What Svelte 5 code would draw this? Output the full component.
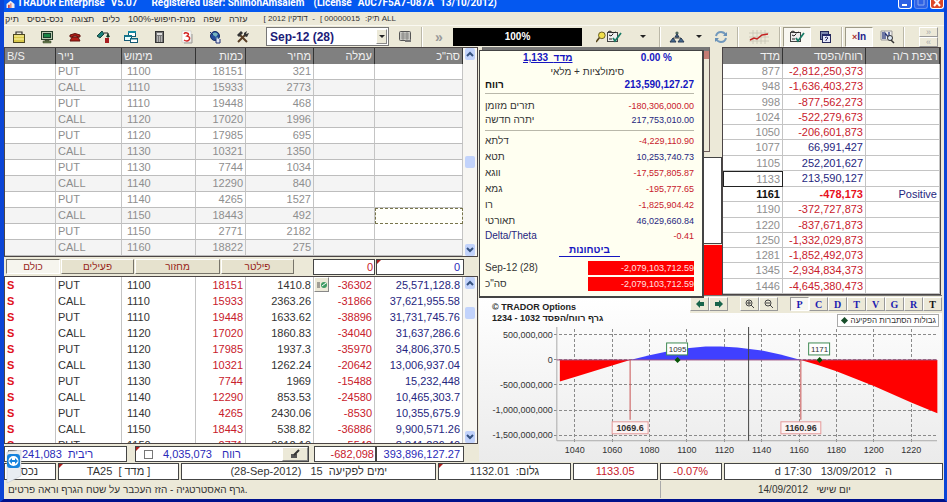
<script lang="ts">
  type Deal = [string, string, string, string, string, string];

  const menu = ['תיק', 'נכס-בסיס', 'תצוגה', 'כלים', 'מנת-חיפוש-100%', 'שפה', 'עזרה'];

  const tools = [
    { icon: 'case', label: 'Portfolio' },
    { icon: 'monitor', label: 'Monitor' },
    { icon: 'phone', label: 'Phone' },
    { icon: 'trade', label: 'Trade' },
    { icon: 'windows', label: 'Windows' },
    { icon: 'calc', label: 'Calculator' },
    { icon: 'three', label: 'Calendar' },
    { icon: 'globe', label: 'Online' },
    { icon: 'hammer', label: 'Tools' }
  ];

  const heads = ['B/S', 'נייר', 'מימוש', 'כמות', 'מחיר', 'עמלה', 'סה"כ'];

  const quotes = [
    ['PUT', 1100, 18151, 321],
    ['CALL', 1110, 15933, 2773],
    ['PUT', 1110, 19448, 468],
    ['CALL', 1120, 17020, 1996],
    ['PUT', 1120, 17985, 695],
    ['CALL', 1130, 10321, 1350],
    ['PUT', 1130, 7744, 1034],
    ['CALL', 1140, 12290, 840],
    ['PUT', 1140, 4265, 1527],
    ['CALL', 1150, 18443, 492],
    ['PUT', 1150, 2771, 2182],
    ['CALL', 1160, 18822, 275]
  ];

  const deals: Deal[] = [
    ['PUT', '1100', '18151', '1410.8', '-36302', '25,571,128.8'],
    ['CALL', '1110', '15933', '2363.26', '-31866', '37,621,955.58'],
    ['PUT', '1110', '19448', '1633.62', '-38896', '31,731,745.76'],
    ['CALL', '1120', '17020', '1860.83', '-34040', '31,637,286.6'],
    ['PUT', '1120', '17985', '1937.3', '-35970', '34,806,370.5'],
    ['CALL', '1130', '10321', '1262.24', '-20642', '13,006,937.04'],
    ['PUT', '1130', '7744', '1969', '-15488', '15,232,448'],
    ['CALL', '1140', '12290', '853.53', '-24580', '10,465,303.7'],
    ['PUT', '1140', '4265', '2430.06', '-8530', '10,355,675.9'],
    ['CALL', '1150', '18443', '538.82', '-36886', '9,900,571.26'],
    ['PUT', '1150', '2771', '3012.10', '-5542', '8,341,236.40']
  ];

  const profits: [string, string][] = [
    ['877', '-2,812,250,373'],
    ['948', '-1,636,403,273'],
    ['998', '-877,562,273'],
    ['1024', '-522,279,673'],
    ['1050', '-206,601,873'],
    ['1077', '66,991,427'],
    ['1105', '252,201,627'],
    ['1133', '213,590,127'],
    ['1161', '-478,173'],
    ['1190', '-372,727,873'],
    ['1220', '-837,671,873'],
    ['1250', '-1,332,029,873'],
    ['1281', '-1,852,492,073'],
    ['1345', '-2,934,834,373'],
    ['1446', '-4,645,380,473']
  ];

  const greeks: [string, string][] = [
    ['דלתא', '-4,229,110.90'],
    ['תטא', '10,253,740.73'],
    ['ווגא', '-17,557,805.87'],
    ['גמא', '-195,777.65'],
    ['רו', '-1,825,904.42'],
    ['תאורטי', '46,029,660.84']
  ];

  const letters = ['P', 'C', 'D', 'T', 'V', 'G', 'R', 'T'];
  let view = $state(0);

  // chart scales: index value -> x, profit in millions -> y
  const px = (v: number) => 96 + (v - 1040) * 1.873;
  const py = (m: number) => 33 - m * 0.0502;

  const xTicks = [1040, 1060, 1080, 1100, 1120, 1140, 1160, 1180, 1200, 1220];
  const yTicks = [500, 0, -500, -1000, -1500];

  const lossLeft = [[1032, 0], [1032, -430], [1040, -340], [1050, -225], [1060, -110], [1069.6, 0]];
  const gain = [[1069.6, 0], [1080, 95], [1090, 175], [1100, 235], [1110, 268], [1118, 270], [1127, 250], [1140, 190], [1150, 110], [1160.96, 0]];
  const lossRight = [[1160.96, 0], [1170, -100], [1180, -225], [1200, -520], [1220, -850], [1234, -1065], [1234, 0]];

  const points = (list: number[][]) => list.map(([v, m]) => `${px(v)},${py(m)}`).join(' ');
  const axisLabel = (m: number) => (m === 0 ? '0' : `${(m * 1000000).toLocaleString('en-US')}`);
  const negative = (s: string) => s.startsWith('-');
</script>

{#snippet icon(name: string)}
  <svg class="icon" viewBox="0 0 16 14" width="16" height="14" aria-hidden="true">
    {#if name === 'case'}
      <path d="M5 4V2h6v2" fill="none" stroke="#333" stroke-width="1.2" />
      <rect x="2.500" y="4.500" width="11" height="8" fill="#d8c84a" stroke="#4b4620" />
      <path d="M3 6h10M3 9h10" stroke="#fff9b0" />
    {:else if name === 'monitor'}
      <rect x="2.500" y="1.500" width="11" height="8" fill="#b8c8b0" stroke="#263d2b" />
      <rect x="4.500" y="3.500" width="7" height="4" fill="#168344" stroke="#173a28" />
      <path d="M6 10h4v1H6zM4 11h8v2H4z" fill="#6b8050" stroke="#34432a" stroke-width=".5" />
    {:else if name === 'phone'}
      <path d="M3 7V5q5-3 10 0v2h-3V6H6v1zM5 7h6l2 4H3z" fill="#b51d16" stroke="#621510" />
    {:else if name === 'trade'}
      <path d="M2 6l5-5 2 3-4 4z" fill="#197f77" stroke="#17433e" />
      <path d="M9 3h4v5" fill="none" stroke="#222" />
      <rect x="10" y="8" width="4" height="5" fill="#a81c20" />
      <path d="M11 7l2-4 2 4z" fill="#143f2a" />
    {:else if name === 'windows'}
      <rect x="5.500" y="1.500" width="7" height="5" fill="#fff" stroke="#145873" />
      <path d="M5 2h8" stroke="#168ba2" stroke-width="2" />
      <rect x="1.500" y="5.500" width="7" height="5" fill="#eaffff" stroke="#145873" />
      <path d="M1 6h8" stroke="#15758c" stroke-width="2" />
      <rect x="7.500" y="8.500" width="7" height="4" fill="#fff" stroke="#145873" />
      <path d="M7 9h8" stroke="#15758c" />
    {:else if name === 'calc'}
      <rect x="4.500" y="1.500" width="8" height="11" fill="#777" stroke="#333" />
      <rect x="6" y="3" width="5" height="2" fill="#ddd" />
      <path d="M6 7h5M6 9h5M6 11h5" stroke="#eee" stroke-dasharray="1 1" />
    {:else if name === 'three'}
      <rect x="3" y="1" width="9" height="11" fill="#fff" stroke="#bbb" stroke-width=".5" />
      <path d="M5 4q1-2 3-1 3 1 0 3 4 1 2 4-2 2-5 0" fill="none" stroke="#d52424" stroke-width="1.500" />
      <path d="M13 4v9H5" fill="none" stroke="#999" />
    {:else if name === 'globe'}
      <circle cx="8" cy="6" r="4.500" fill="#254b9b" stroke="#172f66" />
      <path d="M5 4q3-3 6 0L9 7 6 5zM8 8l3-1-1 3" fill="#75b5bd" />
      <path d="M3 2l3 3M9 8v5h4V9" stroke="#1e2e75" fill="#e0e7f5" />
    {:else if name === 'hammer'}
      <path d="M3 12l8-8M12 12L5 5" stroke="#593e25" stroke-width="2" />
      <path d="M2 5l4-4 2 2-4 4zM9 3l3-2-1 3 3-1-2 4-3-1z" fill="#333" />
    {:else if name === 'layout'}
      <rect x="2.500" y="1.500" width="11" height="9" rx="1" fill="#c9c9c4" stroke="#555" />
      <path d="M4 4h8M4 6h8M4 8h8M6 2v8M10 2v8" stroke="#777" stroke-width=".700" />
      <path d="M8 10h6v2H8z" fill="#777" />
    {:else if name === 'check'}
      <rect x="1.500" y="2.500" width="10" height="9" fill="#eee" stroke="#444" />
      <path d="M2 2l2-1 3 2 3-1M3 5l2 1 2-2M3 9h3" fill="none" stroke="#222" />
      <path d="M7 8l2 3 6-8" fill="none" stroke="#187c66" stroke-width="1.800" />
    {:else if name === 'tree'}
      <path d="M8 4v4M4 10V8h8v2" fill="none" stroke="#444" />
      <circle cx="8" cy="3" r="1.600" fill="#4f675e" />
      <path d="M6 7l2-3 2 3zM1 12l3-4 3 4zM9 12l3-4 3 4z" fill="#456a91" stroke="#293b54" />
    {:else if name === 'refresh'}
      <path d="M3 6q1-4 5-4 3 0 5 3M13 8q-1 4-5 4-3 0-5-3" fill="none" stroke="#7198bc" stroke-width="2" />
      <path d="M14 2v4h-4zM2 12V8h4z" fill="#6690b7" />
    {:else if name === 'help'}
      <rect x="3.500" y="1.500" width="8" height="8" fill="#7c87ae" stroke="#25285b" />
      <rect x="5.500" y="4.500" width="8" height="8" fill="#e6e8f8" stroke="#25285b" />
      <path d="M6 5h7" stroke="#24286b" stroke-width="2" />
      <path d="M8 8q1-2 3 0l-2 2v1" fill="none" stroke="#25285b" />
    {:else if name === 'find'}
      <path d="M2 1h11v9H2z" fill="#eee" stroke="#999" />
      <path d="M4 2v7M6 9V3l4 5V2" fill="none" stroke="#26357a" stroke-width="1.300" />
      <circle cx="11" cy="8" r="2.500" fill="#dce8f6" stroke="#333" />
      <path d="M12 10l3 3" stroke="#333" stroke-width="1.500" />
    {/if}
  </svg>
{/snippet}

{#snippet scrollbar(thumb: string)}
  <div class="scroll">
    <button type="button" aria-label="Scroll up"><svg viewBox="0 0 8 6" width="8" height="6"><path d="M1 5l3-3 3 3" /></svg></button>
    <span class="thumb {thumb}"></span>
    <button type="button" aria-label="Scroll down"><svg viewBox="0 0 8 6" width="8" height="6"><path d="M1 1l3 3 3-3" /></svg></button>
  </div>
{/snippet}

{#snippet dealCols()}
  <colgroup>
    <col class="c-side" /><col class="c-paper" /><col class="c-strike" /><col class="c-qty" /><col class="c-price" /><col class="c-fee" /><col class="c-total" />
  </colgroup>
{/snippet}

<div class="window">
  <header class="title">
    <svg viewBox="0 0 10 10" width="9" height="8" aria-hidden="true"><path d="M0 5l5-4 5 4v5H0z" fill="#eee" /><path d="M2 6h2v4H2zM5 4h1v6H5z" fill="#c33" /></svg>
    <span>TRADOR Enterprise</span>
    <span>V5.07</span>
    <span class="user">Registered user: ShimonAmsalem</span>
    <span>(License</span>
    <span>A0C7F5A7-087A</span>
    <span>13/10/2012)</span>
    <div class="controls">
      <button type="button" aria-label="Minimize"><svg viewBox="0 0 12 8" width="12" height="8"><path d="M3 5h5" stroke="#fff" stroke-width="2" /></svg></button>
      <button type="button" class="dim" aria-label="Maximize"><svg viewBox="0 0 12 8" width="12" height="8"><path d="M3 0v5h6V0" fill="none" stroke="#89a9f0" /></svg></button>
      <button type="button" class="close" aria-label="Close"><svg viewBox="0 0 12 8" width="12" height="8"><path d="M3-1l6 7M9-1L3 6" stroke="#fff" stroke-width="2" /></svg></button>
    </div>
  </header>

  <nav class="menu">
    {#each menu as item}
      <button type="button" dir="rtl">{item}</button>
    {/each}
    <div class="account">
      <span>[ 2012 דודקין &nbsp;-</span>
      <span>[ 00000015</span>
      <span class="file"><bdi dir="rtl">תיק:</bdi> ALL</span>
    </div>
  </nav>

  <div class="toolbar">
    {#each tools as tool}
      <button type="button" class="tool" aria-label={tool.label}>{@render icon(tool.icon)}</button>
    {/each}
    <div class="combo">
      <select aria-label="Expiry"><option>Sep-12 (28)</option></select>
      <span class="drop" aria-hidden="true"></span>
    </div>
    <button type="button" class="tool" aria-label="Layout">{@render icon('layout')}</button>
    <span class="sep"></span>
    <button type="button" class="tool more" aria-label="More">»</button>
    <div class="progress" role="progressbar" aria-valuenow="100" aria-label="Progress">100%</div>
    <button type="button" class="tool wide" aria-label="Search checklist">
      <svg viewBox="0 0 12 14" width="10" height="14" aria-hidden="true"><circle cx="7" cy="5" r="4" fill="#f0df4a" stroke="#504718" /><path d="M4 8l-4 5" stroke="#554318" stroke-width="2" /></svg>
      {@render icon('check')}
    </button>
    <button type="button" class="arrow" aria-label="Search options"></button>
    <span class="sep"></span>
    <button type="button" class="tool" aria-label="Structure">{@render icon('tree')}</button>
    <button type="button" class="arrow" aria-label="Structure options"></button>
    <button type="button" class="tool" aria-label="Refresh">{@render icon('refresh')}</button>
    <span class="sep"></span>
    <button type="button" class="tool graph" aria-label="Graph">
      <svg viewBox="0 0 20 14" width="20" height="14" aria-hidden="true">
        <path d="M4 0v14M8 0v14M12 0v14M16 0v14M0 3h20M0 7h20M0 11h20" stroke="#c8c4b5" stroke-width=".800" />
        <path d="M1 10l4-2 3 1 5-4 6-1" fill="none" stroke="#c42121" stroke-width="1.500" />
      </svg>
    </button>
    <span class="sep"></span>
    <button type="button" class="tool pressed" aria-label="Checklist">{@render icon('check')}</button>
    <button type="button" class="tool" aria-label="Help">{@render icon('help')}</button>
    <span class="sep"></span>
    <button type="button" class="tool pressed in" aria-label="In"><sup>×</sup>In</button>
    <button type="button" class="tool" aria-label="Find">{@render icon('find')}</button>
    <span class="sep"></span>
    <div class="stack">
      <button type="button" aria-label="Expand">»</button>
      <button type="button" aria-label="Collapse">«</button>
    </div>
  </div>

  <main>
    <section class="left">
      <div class="panel">
        <table class="grid quotes">
          {@render dealCols()}
          <thead>
            <tr>{#each heads as head, i}<th class:num={i > 2}>{head}</th>{/each}</tr>
          </thead>
          <tbody>
            {#each quotes as [paper, strike, qty, price], i}
              <tr>
                <td></td><td>{paper}</td><td class="strike">{strike}</td><td class="num">{qty}</td><td class="num">{price}</td><td></td><td class:focus={i === 9}></td>
              </tr>
            {/each}
          </tbody>
        </table>
        {@render scrollbar('middle')}
      </div>

      <div class="tabs">
        <button type="button" class="tab active">כולם</button>
        <button type="button" class="tab mid">פעילים</button>
        <button type="button" class="tab big">מחזור</button>
        <button type="button" class="tab mid">פילטר</button>
        <output class="box fee red">0</output>
        <output class="box sum blue mark">0</output>
      </div>

      <div class="panel deals-panel">
        <table class="grid deals">
          {@render dealCols()}
          <tbody>
            {#each deals as [paper, strike, qty, price, fee, total], i}
              <tr>
                <td class="side">S</td><td>{paper}</td><td class="strike">{strike}</td><td class="num red">{qty}</td><td class="num">{price}</td>
                <td class="num red fee-cell">
                  {#if i === 0}
                    <button type="button" class="mini" aria-label="Row action"><svg viewBox="0 0 12 10" width="12" height="10"><path d="M1 3h3M1 5h3M1 7h3" stroke="#555" /><circle cx="8" cy="5" r="3" fill="#3d9a62" /><path d="M6 6l4-3" stroke="#fff" /></svg></button>
                  {/if}{fee}
                </td>
                <td class="num navy">{total}</td>
              </tr>
            {/each}
          </tbody>
        </table>
        {@render scrollbar('top')}
      </div>

      <div class="totals">
        <label class="box interest"><input type="checkbox" />241,083 &nbsp;ריבית</label>
        <div class="box gain-box mark">
          <label><input type="checkbox" /><span>4,035,073</span> <span>רווח</span></label>
          <button type="button" aria-label="Edit"><svg viewBox="0 0 12 10" width="12" height="10"><path d="M2 5h6v4H2z" fill="#555" /><path d="M5 6l5-5" stroke="#333" stroke-width="2" /></svg></button>
        </div>
        <output class="box fee red">-682,098</output>
        <output class="box sum blue">393,896,127.27</output>
      </div>
    </section>

    <section class="right">
      <div class="upper">
        <div class="behind">
          <div class="sim"><span></span></div>
          <div class="gauge"></div>
          <div class="gauge-loss"></div>
        </div>

        <div class="panel">
          <table class="grid profits">
            <colgroup><col class="p-index" /><col class="p-value" /><col class="p-floor" /></colgroup>
            <thead><tr><th class="num">מדד</th><th class="num">רווח/הפסד</th><th class="num" dir="rtl">רצפת ר/ה</th></tr></thead>
            <tbody>
              {#each profits as [index, value]}
                <tr class:current={index === '1161'}>
                  <td class="num index" class:selected={index === '1133'}>{index}</td>
                  <td class="num {negative(value) ? 'red' : 'navy'}">{value}</td>
                  <td class="num navy floor">{index === '1161' ? 'Positive' : ''}</td>
                </tr>
              {/each}
            </tbody>
          </table>
        </div>

        <aside class="popup">
          <div class="top-line"><a href="#index">1,133 &nbsp;מדד</a><b>0.00 %</b></div>
          <div class="subtitle" dir="rtl">סימולציות + מלאי</div>
          <div class="line profit"><span>רווח</span><b>213,590,127.27</b></div>
          <div class="group">
            <div class="line"><span>תזרים מזומן</span><span class="val red">-180,306,000.00</span></div>
            <div class="line"><span>יתרה חדשה</span><span class="val navy">217,753,010.00</span></div>
          </div>
          {#each greeks as [name, value]}
            <div class="line greek"><span>{name}</span><span class="val {negative(value) ? 'red' : 'navy'}">{value}</span></div>
          {/each}
          <div class="line"><span class="navy">Delta/Theta</span><span class="val red">-0.41</span></div>
          <div class="margin-title"><a href="#margin">ביטחונות</a></div>
          <div class="line greek"><span>Sep-12 (28)</span><span class="val alert">-2,079,103,712.59</span></div>
          <div class="line greek"><span>סה"כ</span><span class="val alert">-2,079,103,712.59</span></div>
        </aside>
      </div>

      <div class="chart">
        <div class="chart-head">
          <div class="chart-title">© TRADOR Options<br />1234 - 1032 גרף רווח/הפסד</div>
          <div class="chart-side">
            <div class="chart-tools">
              <button type="button" aria-label="Previous"><svg viewBox="0 0 10 8" width="10" height="8"><path d="M1 4l4-4v2h4v4H5v2z" fill="#17644b" /></svg></button>
              <button type="button" class="gap" aria-label="Next"><svg viewBox="0 0 10 8" width="10" height="8"><path d="M9 4L5 0v2H1v4h4v2z" fill="#17644b" /></svg></button>
              <button type="button" aria-label="Zoom in"><svg viewBox="0 0 10 10" width="10" height="10"><circle cx="4" cy="4" r="3" fill="none" stroke="#444" /><path d="M6 6l3 3M2 4h4M4 2v4" stroke="#444" /></svg></button>
              <button type="button" class="gap" aria-label="Zoom out"><svg viewBox="0 0 10 10" width="10" height="10"><circle cx="4" cy="4" r="3" fill="none" stroke="#444" /><path d="M6 6l3 3M2 4h4" stroke="#444" /></svg></button>
              {#each letters as letter, i}
                <button type="button" class="letter" class:on={view === i} class:black={i === 7} onclick={() => (view = i)}>{letter}</button>
              {/each}
            </div>
            <div class="legend"><i></i><span>גבולות הסתברות הפקיעה</span></div>
          </div>
        </div>
        <svg class="plot" viewBox="0 0 464 135" role="img" aria-label="Profit and loss">
          {#each yTicks as m}
            <line class="dash" x1="75" x2="459" y1={py(m)} y2={py(m)} />
            <text x="74" y={py(m) + 3} text-anchor="end">{axisLabel(m)}</text>
          {/each}
          {#each xTicks as v}
            <line class="dash" x1={px(v)} x2={px(v)} y1="2" y2="115" />
            <text x={px(v)} y="126" text-anchor="middle">{v}</text>
          {/each}
          <path class="axis" d="M78 0V114H459" />
          <polygon points={points(lossLeft)} fill="#f00" />
          <polygon points={points(gain)} fill="#4040ff" />
          <polygon points={points(lossRight)} fill="#f00" />
          <line class="zero" x1="78" x2="459" y1="33" y2="33" />
          <line class="now" x1={px(1133)} x2={px(1133)} y1="0" y2="114" />
          {#each [1069.6, 1160.96] as v}
            <line class="even" x1={px(v)} x2={px(v)} y1="33" y2="93" />
            <rect class="even-box" x={px(v) - (v > 1100 ? 20 : 18)} y="95" width={v > 1100 ? 40 : 36} height="12" />
            <text class="bold" x={px(v)} y="104" text-anchor="middle">{v}</text>
          {/each}
          {#each [1095, 1171] as v}
            <path d="M{px(v)} 30l3 3-3 3-3-3z" fill="#075407" />
            <rect class="bound" x={px(v) - 11} y="16" width="21" height="12" />
            <text class="slim" x={px(v)} y="25" text-anchor="middle">{v}</text>
          {/each}
        </svg>
      </div>
    </section>
  </main>

  <div class="info">
    <span class="cell asset">נכס</span>
    <span class="cell mark">TA25 &nbsp;[ מדד ]</span>
    <span class="cell">(28-Sep-2012) &nbsp; 15 &nbsp;ימים לפקיעה</span>
    <span class="cell mark">1132.01 &nbsp;<bdi dir="rtl">גלום:</bdi></span>
    <span class="cell red">1133.05</span>
    <span class="cell red">-0.07%</span>
    <span class="cell">d 17:30 &nbsp; 13/09/2012 &nbsp; ה</span>
  </div>

  <footer>
    <span class="hint">גרף האסטרטגיה - הזז העכבר על שטח הגרף וראה פרטים.</span>
    <span class="today">14/09/2012 &nbsp; יום שישי</span>
  </footer>

  <div class="remote" aria-hidden="true">
    <svg viewBox="0 0 16 34" width="16" height="34"><path d="M1 2l14-2v26L1 33z" fill="#e8edf2" stroke="#b9c0c8" stroke-width=".500" /><rect x="1" y="4" width="13" height="14" rx="3" fill="#1683dd" /><circle cx="7.500" cy="11" r="5" fill="#fff" /><path d="M3 11l3-3v2h3V8l3 3-3 3v-2H6v2z" fill="#1683dd" /></svg>
  </div>
</div>

<style>
  :global(body) {
    background: #ece9d8;
  }

  .window,
  .window * {
    box-sizing: border-box;
  }

  .window {
    position: relative;
    display: flex;
    flex-direction: column;
    min-height: 100vh;
    border: solid #0b45d6;
    border-width: 0 3px 3px 4px;
    border-bottom-color: #00128c;
    background: #ece9d8;
    color: #333;
    font-family: "Liberation Sans", Arial, sans-serif;
    font-size: 11px;
    overflow: hidden;
  }

  button {
    display: inline-flex;
    align-items: center;
    justify-content: center;
    margin: 0;
    padding: 0;
    border: 0;
    background: none;
    color: inherit;
    font: inherit;
  }

  .red {
    color: #c8202c;
  }

  .blue {
    color: #2a2ab8;
  }

  .navy {
    color: #26267e;
  }

  .title {
    display: flex;
    gap: 6px;
    height: 12px;
    padding-left: 2px;
    background: #0458f0;
    color: #fff;
    font-family: Roboto, "Liberation Sans", sans-serif;
    font-size: 10px;
    font-weight: bold;
    line-height: 6px;
    white-space: nowrap;
    overflow: hidden;
  }

  .title > svg {
    margin-right: -4px;
  }

  .user {
    margin: 0 3px 0 8px;
  }

  .controls {
    display: flex;
    gap: 2px;
    margin-left: auto;
  }

  .controls button {
    width: 14px;
    height: 9px;
    border: 1px solid #fff;
    border-top: 0;
    border-radius: 0 0 3px 3px;
    background: #2f62e4;
  }

  .controls .dim {
    border-color: #5f8cf0;
  }

  .controls .close {
    background: #dd4828;
  }

  .menu {
    display: flex;
    align-items: center;
    gap: 8px;
    height: 13px;
    padding-left: 1px;
    font-size: 9px;
    white-space: nowrap;
  }

  .menu button {
    line-height: 12px;
  }

  .account {
    display: flex;
    gap: 5px;
    margin-left: 8px;
    font-size: 8px;
    line-height: 12px;
  }

  .toolbar {
    display: flex;
    align-items: center;
    height: 22px;
    padding: 0 6px 0 1px;
    border-top: 1px solid #faf9f2;
  }

  .tool {
    flex: none;
    width: 28px;
    height: 20px;
  }

  .tool.wide {
    width: 30px;
    margin-left: 12px;
  }

  .tool.graph {
    width: 36px;
  }

  .pressed {
    border: 1px solid #aaa692;
    border-color: #9d9a88 #fff #fff #9d9a88;
    background: #f8f7f1;
  }

  .in {
    color: #23238c;
    font-size: 10px;
    font-weight: bold;
  }

  .in sup {
    color: #a33;
    font-size: 9px;
    line-height: 6px;
  }

  .more {
    color: #999;
    font-size: 14px;
    font-weight: bold;
  }

  .arrow {
    flex: none;
    width: 14px;
    height: 20px;
    margin: 0 1px;
  }

  .wide + .arrow {
    margin: 0 7px 0 12px;
  }

  .arrow::before,
  .drop::before {
    content: "";
    border: solid transparent;
    border-width: 3px 3px 0;
    border-top-color: #222;
  }

  .sep {
    flex: none;
    width: 2px;
    height: 20px;
    margin: 0 2px;
    border-left: 1px solid #bbb8a8;
    background: #fff;
  }

  .combo {
    position: relative;
    flex: none;
    width: 123px;
    margin: 0 2px 0 9px;
  }

  .combo select {
    width: 100%;
    height: 19px;
    padding: 0 3px;
    border: 1px solid #777;
    background: #fff;
    color: #1b1b78;
    font: bold 12px "Liberation Sans", sans-serif;
    appearance: none;
  }

  .drop {
    position: absolute;
    top: 2px;
    right: 2px;
    display: grid;
    place-items: center;
    width: 11px;
    height: 15px;
    border: 1px solid #888;
    border-color: #fff #888 #888 #fff;
    background: #ece9d8;
    pointer-events: none;
  }

  .progress {
    flex: 1;
    height: 18px;
    background: #000;
    color: #fff;
    font-size: 10px;
    font-weight: bold;
    line-height: 18px;
    text-align: center;
  }

  .stack {
    display: grid;
    width: 19px;
    margin-left: 12px;
  }

  .stack button {
    height: 10px;
    border: 1px solid #fff;
    border-color: #fff #999 #999 #fff;
    color: #aaa;
    font-size: 9px;
    line-height: 8px;
  }

  main {
    display: grid;
    grid-template-columns: 474fr 466fr;
  }

  .left,
  .right {
    min-width: 0;
  }

  .panel {
    display: flex;
    border: 1px solid #4b4545;
    background: #fff;
  }

  .grid {
    flex: 1;
    width: 0;
    min-width: 0;
    border-collapse: separate;
    border-spacing: 0;
    table-layout: fixed;
  }

  .c-side { width: 51px; }
  .c-paper { width: 66px; }
  .c-strike { width: 74px; }
  .c-qty { width: 50px; }
  .c-price { width: 68px; }
  .c-fee { width: 61px; }
  .c-total { width: 88px; }
  .p-index { width: 60px; }
  .p-value { width: 83px; }
  .p-floor { width: 74px; }

  th,
  td {
    height: 16px;
    padding: 0 2px;
    border-right: 1px solid #c4c4c4;
    font-weight: normal;
    line-height: 15px;
    text-align: left;
    white-space: nowrap;
  }

  th {
    border-right-color: #333;
    background: #808080;
    color: #f0f0f0;
    line-height: 16px;
  }

  .num {
    text-align: right;
  }

  .strike {
    padding-left: 5px;
  }

  .quotes td {
    border-bottom: 1px solid #bdbdbd;
    color: #8e8e8e;
  }

  .quotes tbody tr:nth-child(even) {
    background: #f4f4f4;
  }

  .quotes td.focus {
    border: 1px dashed #77744c;
    background: #fffffa;
  }

  .deals-panel {
    height: 168px;
    overflow: hidden;
  }

  .deals .side {
    color: #e01020;
    font-weight: bold;
  }

  .fee-cell {
    position: relative;
  }

  .mini {
    position: absolute;
    top: 0;
    left: 0;
    width: 15px;
    height: 15px;
    border: 1px solid #fff;
    border-color: #fff #888 #888 #fff;
    background: #ece9d8;
  }

  .scroll {
    display: flex;
    flex-direction: column;
    align-items: center;
    width: 14px;
    background: #f7f6f2;
  }

  .scroll button,
  .thumb {
    width: 10px;
    height: 12px;
    border-radius: 2px;
    background: #c2d3fb;
  }

  .scroll button:last-child {
    margin-top: auto;
  }

  .scroll path {
    fill: none;
    stroke: #35527f;
    stroke-width: 2;
  }

  .thumb.middle {
    margin-top: 96px;
  }

  .thumb.top {
    margin-top: 18px;
  }

  .tabs,
  .totals {
    display: flex;
    align-items: center;
    padding-right: 14px;
  }

  .tabs {
    gap: 1px;
    height: 19px;
    padding-left: 2px;
  }

  .tab {
    height: 15px;
    border: 1px solid #fff;
    border-color: #fff #77746a #77746a #fff;
    background: #e6e2ce;
    color: #962418;
    font-size: 10px;
  }

  .tab.active {
    width: 54px;
    border-color: #77746a #fff #fff #77746a;
    background: #f6f5ee;
  }

  .tab.mid {
    width: 73px;
  }

  .tab.big {
    width: 85px;
  }

  .box {
    position: relative;
    height: 16px;
    padding: 0 3px;
    border: 1px solid #444;
    background: #fff;
    line-height: 14px;
    text-align: right;
    white-space: nowrap;
  }

  .box.fee {
    width: 62px;
    margin-left: auto;
    padding-right: 1px;
  }

  .box.sum {
    width: 88px;
  }

  .mark::before {
    content: "";
    position: absolute;
    top: 0;
    left: 0;
    border: 2px solid #b02020;
    border-right-color: transparent;
    border-bottom-color: transparent;
  }

  .totals {
    align-items: flex-end;
    height: 18px;
  }

  .totals input {
    width: 9px;
    height: 9px;
    margin: 0;
    border: 1px solid #777;
    background: #fff;
    appearance: none;
  }

  .interest,
  .gain-box,
  .gain-box label {
    display: flex;
    align-items: center;
    color: #2a2ab8;
  }

  .interest {
    gap: 5px;
    width: 123px;
  }

  .gain-box {
    justify-content: space-between;
    width: 174px;
    margin-left: 8px;
    padding: 0 0 0 8px;
  }

  .gain-box label {
    gap: 10px;
  }

  .gain-box button {
    width: 26px;
    height: 14px;
    border: 1px solid #fff;
    border-color: #fff #888 #888 #fff;
    background: #ece9d8;
  }

  .upper {
    position: relative;
    display: grid;
    grid-template-columns: 244fr 219fr;
    padding-right: 3px;
  }

  .behind {
    display: flex;
    flex-direction: column;
    padding-left: 4px;
  }

  .sim {
    flex: 1;
    margin: 0 12px 5px 0;
    border: 1px solid #6d5d5a;
    border-top: 4px solid #777;
  }

  .sim span {
    float: right;
    width: 7px;
    height: 8px;
    background: #c47c74;
  }

  .gauge {
    height: 87px;
    border: 1px solid #444;
    background: #fff;
  }

  .gauge-loss {
    height: 50px;
    margin-top: 1px;
    background: #f00;
  }

  .profits {
    height: 246px;
  }

  .profits th {
    height: 16px;
  }

  .profits td {
    height: 15px;
    border-bottom: 1px solid #c4c4c4;
    line-height: 14px;
  }

  .profits .index {
    color: #8e8e8e;
  }

  .profits .selected {
    border: 1px solid #222;
  }

  .profits .current td:not(.floor) {
    font-weight: bold;
  }

  .profits .current .index {
    color: #111;
  }

  .profits .current .red {
    color: #e8101c;
  }

  .popup {
    position: absolute;
    top: 3px;
    left: 1px;
    z-index: 2;
    width: 225px;
    height: 248px;
    padding: 0 8px 0 5px;
    border: 1px solid #444;
    border-width: 1px 2px 2px 1px;
    background: #fffff1;
    font-size: 10px;
    line-height: 14px;
    white-space: nowrap;
  }

  .popup a,
  .popup b {
    color: #1515c0;
    font-weight: bold;
  }

  .top-line {
    display: flex;
    justify-content: space-between;
    padding: 0 22px 0 38px;
  }

  .subtitle {
    padding-right: 70px;
    line-height: 13px;
  }

  .line {
    display: flex;
    align-items: center;
    justify-content: space-between;
  }

  .profit {
    color: #111;
    font-weight: bold;
  }

  .group {
    margin: 1px 0 2px;
    padding: 5px 0 3px;
    border: solid #b9b8aa;
    border-width: 1px 0;
  }

  .greek {
    height: 16px;
  }

  .val {
    font-size: 9px;
  }

  .alert {
    width: 106px;
    height: 14px;
    background: #f00;
    color: #ffe0e0;
    text-align: right;
  }

  .margin-title {
    margin-bottom: 3px;
    text-align: center;
  }

  .margin-title a {
    display: inline-block;
    height: 14px;
    padding: 0 10px;
    border-bottom: 1px solid #1515c0;
    text-decoration: none;
  }

  .chart {
    margin: 0 2px 0 1px;
    border-top: 1px solid #777;
    background: linear-gradient(#fff, #ebebeb);
  }

  .chart-head {
    display: flex;
    justify-content: space-between;
    height: 31px;
  }

  .chart-title {
    padding: 6px 0 0 13px;
    color: #222;
    font-size: 9px;
    font-weight: bold;
    line-height: 11px;
  }

  .chart-tools {
    display: flex;
    height: 17px;
    padding: 1px 0 0;
    background: #ece9d8;
  }

  .chart-tools button {
    width: 19px;
    height: 14px;
    border: 1px solid #fff;
    border-color: #fff #999 #999 #fff;
  }

  .chart-tools .gap {
    margin-right: 12px;
  }

  .chart-tools .letter {
    color: #1c1cb0;
    font-family: "Liberation Serif", serif;
    font-size: 10px;
    font-weight: bold;
  }

  .chart-tools .on {
    border-color: #999 #fff #fff #999;
    background: #f8f7f1;
  }

  .chart-tools .black {
    color: #111;
  }

  .legend {
    display: flex;
    align-items: center;
    gap: 4px;
    width: max-content;
    height: 13px;
    margin: 1px 3px 0 auto;
    padding: 0 2px 0 4px;
    border: 1px solid #aaa;
    background: #fff;
    font-size: 8px;
  }

  .legend i {
    width: 5px;
    height: 5px;
    background: #174e2a;
    transform: rotate(45deg);
  }

  .plot {
    display: block;
    width: 100%;
    height: auto;
  }

  .plot text {
    fill: #333;
    font-size: 9px;
  }

  .plot .bold {
    font-weight: bold;
  }

  .plot .slim {
    font-size: 8px;
  }

  .dash {
    stroke: #8a8a8a;
    stroke-dasharray: 3 2;
    shape-rendering: crispEdges;
  }

  .axis {
    fill: none;
    stroke: #aaa;
  }

  .zero {
    stroke: #a05080;
  }

  .now {
    stroke: #444;
  }

  .even {
    stroke: #c85050;
  }

  .even-box {
    fill: #fbf3f3;
    stroke: #e59a9a;
  }

  .bound {
    fill: #fff;
    stroke: #3f8a52;
  }

  .info {
    display: grid;
    grid-template-columns: 52fr 121fr 255fr 132fr 85fr 62fr 219fr;
    gap: 2px;
    height: 18px;
    padding: 1px 1px 0 0;
    line-height: 15px;
  }

  .cell {
    position: relative;
    border: 1px solid #444;
    background: #fff;
    text-align: center;
    white-space: nowrap;
  }

  .asset {
    padding-right: 17px;
    text-align: right;
  }

  footer {
    display: grid;
    grid-template-columns: 656fr 284fr;
    align-items: center;
    flex: 1;
    min-height: 19px;
    font-size: 10px;
    line-height: 17px;
  }

  .hint {
    padding-left: 4px;
  }

  .today {
    padding-left: 97px;
    border-left: 1px solid #aaa;
  }

  .remote {
    position: absolute;
    bottom: 15px;
    left: 2px;
    height: 34px;
  }
</style>
